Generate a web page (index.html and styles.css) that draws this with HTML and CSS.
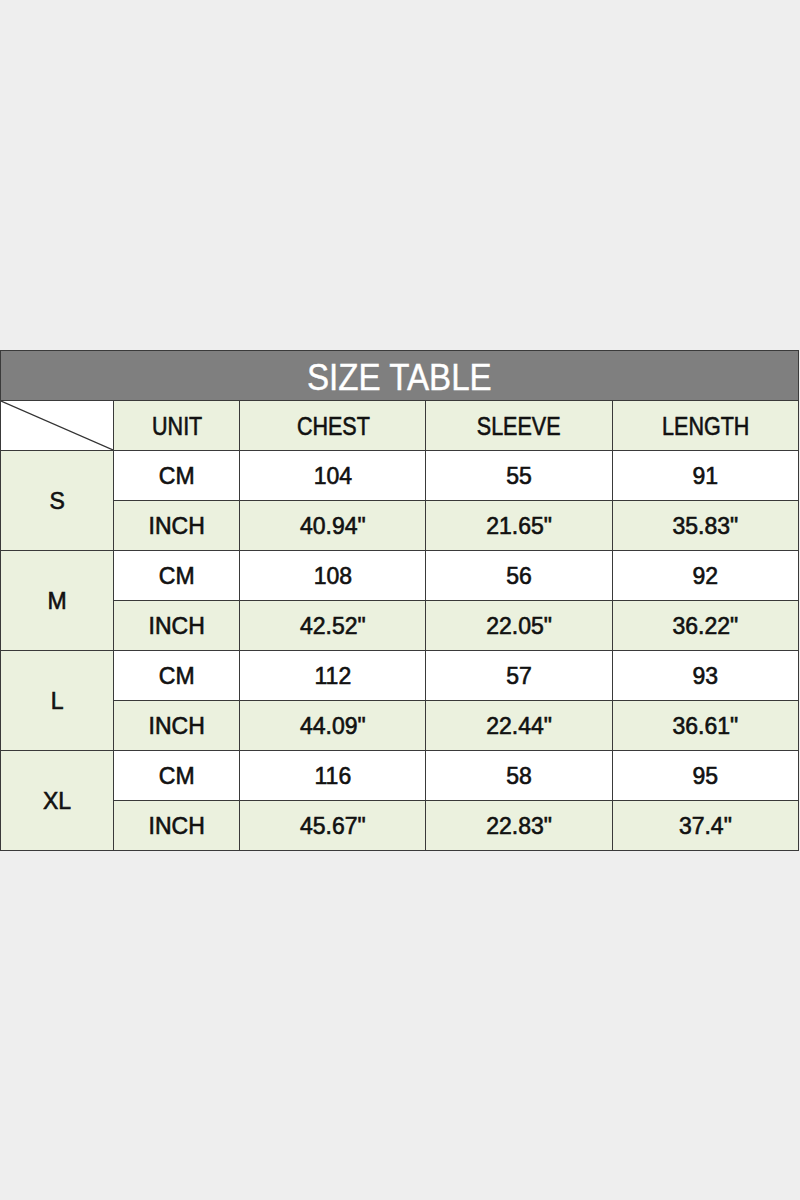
FILE: index.html
```html
<!DOCTYPE html>
<html>
<head>
<meta charset="utf-8">
<link rel="stylesheet" href="styles.css">
</head>
<body>
<div class="page">
<table class="size-table">
  <colgroup>
    <col class="c-size"><col class="c-unit"><col class="c-val"><col class="c-val"><col class="c-val">
  </colgroup>
  <thead>
    <tr><th colspan="5" class="title"><span class="narrow">SIZE TABLE</span></th></tr>
    <tr class="head">
      <th class="diag"><svg class="diag-line" viewBox="0 0 112 49" preserveAspectRatio="none"><line x1="0" y1="0" x2="112" y2="49" stroke="#333" stroke-width="1.2"/></svg></th>
      <th><span class="narrow">UNIT</span></th><th><span class="narrow">CHEST</span></th><th><span class="narrow">SLEEVE</span></th><th><span class="narrow">LENGTH</span></th>
    </tr>
  </thead>
  <tbody>
    <tr class="cm"><td rowspan="2" class="size">S</td><td>CM</td><td>104</td><td>55</td><td>91</td></tr>
    <tr class="inch"><td>INCH</td><td>40.94"</td><td>21.65"</td><td>35.83"</td></tr>
    <tr class="cm"><td rowspan="2" class="size">M</td><td>CM</td><td>108</td><td>56</td><td>92</td></tr>
    <tr class="inch"><td>INCH</td><td>42.52"</td><td>22.05"</td><td>36.22"</td></tr>
    <tr class="cm"><td rowspan="2" class="size">L</td><td>CM</td><td>112</td><td>57</td><td>93</td></tr>
    <tr class="inch"><td>INCH</td><td>44.09"</td><td>22.44"</td><td>36.61"</td></tr>
    <tr class="cm"><td rowspan="2" class="size">XL</td><td>CM</td><td>116</td><td>58</td><td>95</td></tr>
    <tr class="inch"><td>INCH</td><td>45.67"</td><td>22.83"</td><td>37.4"</td></tr>
  </tbody>
</table>
</div>
</body>
</html>
```
FILE: styles.css
```css
html, body {
  margin: 0;
  padding: 0;
  background: #eeeeee;
  width: 800px;
  height: 1200px;
}
.page {
  padding-top: 350px;
}
.size-table {
  border-collapse: collapse;
  table-layout: fixed;
  width: 799px;
  font-family: "Liberation Sans", Arial, sans-serif;
  color: #111;
}
.c-size { width: 113px; }
.c-unit { width: 126px; }
.c-val { width: 186px; }
.size-table th,
.size-table td {
  border: 1px solid #3a3a3a;
  height: 47px;
  padding: 2px 0 0 0;
  text-align: center;
  vertical-align: middle;
  font-size: 23px;
  font-weight: normal;
  -webkit-text-stroke: 0.6px #111;
}
.narrow {
  display: inline-block;
  transform: scaleX(0.86);
}
.size-table th.title {
  background: #7f7f7f;
  color: #ffffff;
  font-size: 36px;
  -webkit-text-stroke: 0.4px #ffffff;
  padding-top: 4px;
  height: 45px;
}
.size-table th.title .narrow {
  transform: scaleX(0.92);
}
.head th {
  background: #ebf1de;
  font-size: 25px;
}
.size-table .head th.diag {
  background: #ffffff;
  padding: 0;
  height: 49px;
}
.diag-line {
  display: block;
  width: 112px;
  height: 49px;
}
.cm td { background: #ffffff; }
.inch td { background: #ebf1de; }
.size-table td.size { background: #ebf1de; }
```
